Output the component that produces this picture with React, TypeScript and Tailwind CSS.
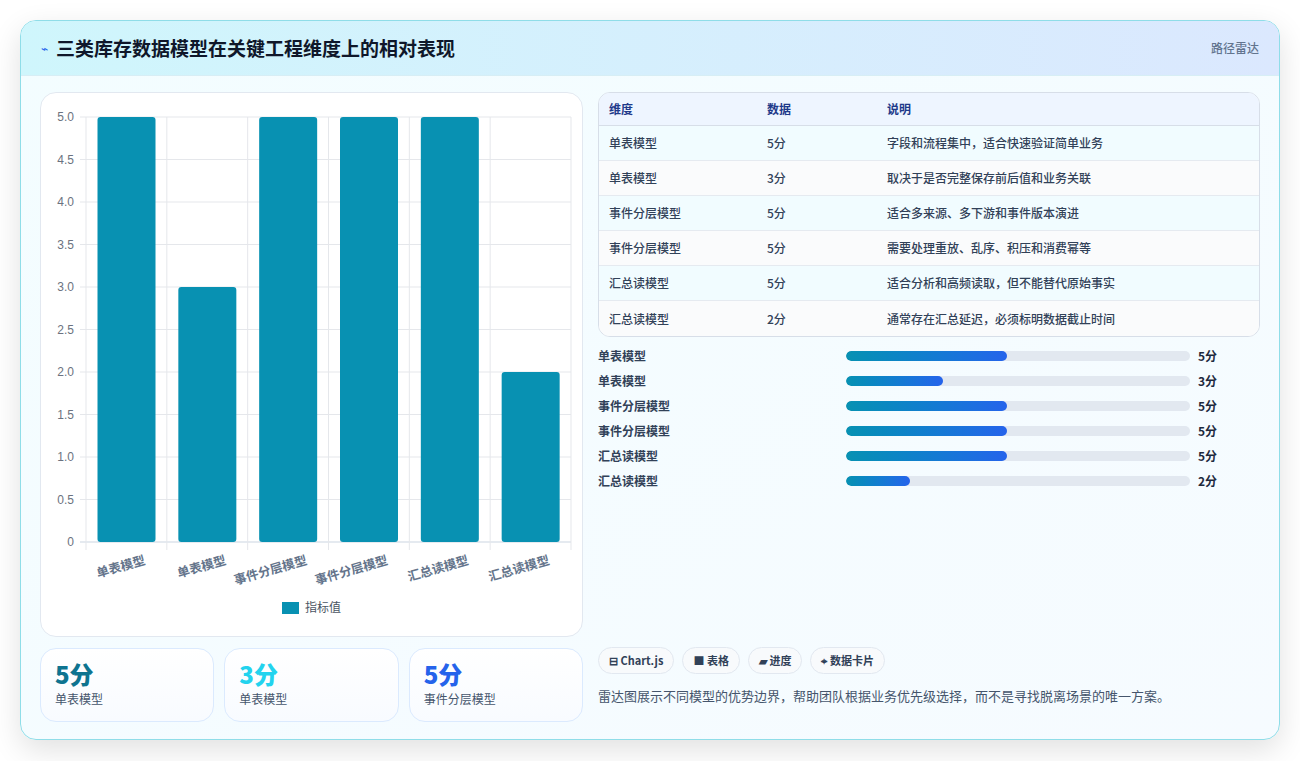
import React from "react";

const rows = [
  ["单表模型", "5分", "字段和流程集中，适合快速验证简单业务"],
  ["单表模型", "3分", "取决于是否完整保存前后值和业务关联"],
  ["事件分层模型", "5分", "适合多来源、多下游和事件版本演进"],
  ["事件分层模型", "5分", "需要处理重放、乱序、积压和消费幂等"],
  ["汇总读模型", "5分", "适合分析和高频读取，但不能替代原始事实"],
  ["汇总读模型", "2分", "通常存在汇总延迟，必须标明数据截止时间"],
];
const vals = [5, 3, 5, 5, 5, 2];
const barW = [161, 97, 161, 161, 161, 64];

function Chart() {
  const x0 = 45, x1 = 530, yTop = 24, yBot = 449;
  const unit = (yBot - yTop) / 5;
  const cw = (x1 - x0) / 6;
  const ticks = [0, 0.5, 1, 1.5, 2, 2.5, 3, 3.5, 4, 4.5, 5];
  return (
    <svg width="542" height="544" className="block">
      {ticks.map((t) => {
        const y = yBot - t * unit;
        return (
          <g key={t}>
            <line x1={x0 - 6} x2={x1} y1={y} y2={y} stroke={t === 0 ? "#cbd5e1" : "#e5e7eb"} />
            <text x={x0 - 12} y={y + 4} textAnchor="end" fontSize="12" fill="#6b7280" fontFamily="Liberation Sans, sans-serif">
              {t === 0 ? "0" : t.toFixed(1)}
            </text>
          </g>
        );
      })}
      {[0, 1, 2, 3, 4, 5, 6].map((i) => (
        <line key={i} x1={x0 + i * cw} x2={x0 + i * cw} y1={yTop} y2={yBot + 8} stroke="#e5e7eb" />
      ))}
      {vals.map((v, i) => {
        const h = v * unit;
        return <rect key={i} x={x0 + i * cw + 11.5} y={yBot - h} width={58} height={h} rx={3} fill="#0891b2" />;
      })}
      {rows.map((r, i) => (
        <text key={i} transform={`translate(${x0 + i * cw + 60},${yBot + 22}) rotate(-16)`} textAnchor="end" fontSize="12.5" fontWeight="700" fill="#64748b" fontFamily="Noto Sans CJK SC, sans-serif">
          {r[0]}
        </text>
      ))}
      <rect x={241} y={509} width={17} height={12} fill="#0891b2" />
      <text x={264} y={519} fontSize="12" fill="#4b5563" fontFamily="Noto Sans CJK SC, sans-serif">指标值</text>
    </svg>
  );
}

export default function App() {
  return (
    <div className="min-h-[761px] bg-white p-5 pb-0" style={{ fontFamily: "'Noto Sans CJK SC', 'Noto Sans', sans-serif" }}>
      <div className="h-[720px] rounded-2xl border border-[#8fdde8] bg-gradient-to-br from-[#f3fdff] to-[#f6fbff] shadow-[0_10px_30px_rgba(0,0,0,0.12)] overflow-hidden flex flex-col">
        <div className="h-[55px] flex items-center justify-between px-5 bg-gradient-to-r from-[#cff6fc] to-[#dbe8fe] border-b border-[#d7eef5]">
          <div className="flex items-center gap-2">
            <span className="text-[#2563eb] text-xs">⌁</span>
            <span className="text-[19px] font-bold text-[#0f172a]">三类库存数据模型在关键工程维度上的相对表现</span>
          </div>
          <span className="text-xs text-slate-500 font-medium">路径雷达</span>
        </div>
        <div className="flex gap-[15px] px-[19px] pt-4">
          <div className="w-[543px] flex flex-col gap-[11px]">
            <div className="h-[545px] rounded-2xl border border-[#e2e8f0] bg-white overflow-hidden">
              <Chart />
            </div>
            <div className="grid grid-cols-3 gap-[10px]">
              {[["5分", "text-[#0e7490]", "单表模型"], ["3分", "text-[#22d3ee]", "单表模型"], ["5分", "text-[#2563eb]", "事件分层模型"]].map(([v, c, l], i) => (
                <div key={i} className="h-[74px] rounded-2xl border border-[#dbeafe] bg-gradient-to-b from-white to-[#f8fbff] px-[14px] pt-[10px]">
                  <div className={`text-[24px] leading-[30px] font-extrabold ${c}`}>{v}</div>
                  <div className="text-xs text-slate-600 mt-[2px]">{l}</div>
                </div>
              ))}
            </div>
          </div>
          <div className="flex-1 flex flex-col">
            <div className="rounded-xl border border-[#d7dee8] overflow-hidden bg-white">
              <div className="flex h-[33px] items-center bg-[#eef5ff] border-b border-[#d7dee8] text-xs font-semibold text-[#1e3a8a]">
                <div className="w-[158px] pl-[10px]">维度</div>
                <div className="w-[120px] pl-[10px]">数据</div>
                <div className="pl-[10px]">说明</div>
              </div>
              {rows.map((r, i) => (
                <div key={i} className={`flex h-[35px] items-center text-xs font-medium text-slate-700 ${i % 2 === 0 ? "bg-[#f1fcff]" : "bg-[#fafbfc]"} ${i < 5 ? "border-b border-[#e5eaf0]" : ""}`}>
                  <div className="w-[158px] pl-[10px]">{r[0]}</div>
                  <div className="w-[120px] pl-[10px]">{r[1]}</div>
                  <div className="pl-[10px]">{r[2]}</div>
                </div>
              ))}
            </div>
            <div className="mt-[10px] flex flex-col gap-[7px]">
              {rows.map((r, i) => (
                <div key={i} className="flex items-center h-[18px] text-xs font-semibold text-slate-700">
                  <div className="w-[248px]">{r[0]}</div>
                  <div className="w-[344px] h-[10px] rounded-full bg-[#e2e8f0] overflow-hidden">
                    <div className="h-full rounded-full bg-gradient-to-r from-[#0891b2] to-[#2563eb]" style={{ width: barW[i] }} />
                  </div>
                  <div className="ml-[8px] font-bold text-slate-800">{r[1]}</div>
                </div>
              ))}
            </div>
            <div className="mt-auto flex gap-[8px]">
              {["⊟ Chart.js", "■ 表格", "▰ 进度", "⌖ 数据卡片"].map((c) => (
                <span key={c} className="h-[27px] px-[10px] flex items-center rounded-full border border-[#e2e8f0] bg-[#f8fafc] text-[11px] font-semibold text-slate-700">{c}</span>
              ))}
            </div>
            <div className="mt-[12px] mb-[17px] text-[13px] text-slate-600">雷达图展示不同模型的优势边界，帮助团队根据业务优先级选择，而不是寻找脱离场景的唯一方案。</div>
          </div>
        </div>
      </div>
    </div>
  );
}
